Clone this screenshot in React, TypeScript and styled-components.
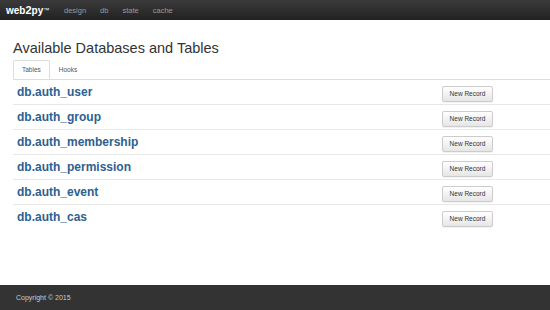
import React from 'react';
import styled, { createGlobalStyle } from 'styled-components';

const GlobalStyle = createGlobalStyle`
  html, body {
    margin: 0;
    padding: 0;
    background: #fff;
    font-family: 'Liberation Sans', Arial, sans-serif;
    color: #333;
  }
`;

const Page = styled.div`
  width: 550px;
  height: 310px;
  display: flex;
  flex-direction: column;
  overflow: hidden;
`;

const NavBar = styled.div`
  height: 20px;
  background: linear-gradient(to bottom, #3a3a3a 0%, #222 100%);
  display: flex;
  align-items: center;
  padding-left: 6px;
  flex-shrink: 0;
`;

const Brand = styled.div`
  color: #fff;
  font-weight: 700;
  font-size: 10px;
  width: 58px;

  b {
    font-size: 11px;
  }

  sup {
    font-size: 6px;
    font-weight: 400;
    vertical-align: 2px;
  }
`;

const NavLink = styled.span`
  color: #9a9a9a;
  font-size: 7.5px;
  margin-right: 14px;
`;

const Main = styled.div`
  flex: 1;
  padding: 20px 0 0 13px;
`;

const Title = styled.h1`
  margin: 0 0 3px;
  font-size: 14.5px;
  font-weight: 400;
  color: #333;
  line-height: 17px;
`;

const Tabs = styled.div`
  display: flex;
  border-bottom: 1px solid #ddd;
  height: 19px;
`;

const Tab = styled.div<{ active?: boolean }>`
  font-size: 6.5px;
  color: #555;
  padding: 0 8px;
  display: flex;
  align-items: center;
  height: 19px;
  box-sizing: border-box;
  border: 1px solid ${(p) => (p.active ? '#ddd' : 'transparent')};
  border-bottom-color: ${(p) => (p.active ? '#fff' : 'transparent')};
  border-radius: 2px 2px 0 0;
  margin-bottom: -1px;
  background: #fff;
`;

const Table = styled.div`
  display: flex;
  flex-direction: column;
`;

const Row = styled.div<{ last?: boolean }>`
  display: grid;
  grid-template-columns: 429px auto;
  align-items: center;
  height: 25px;
  border-bottom: 1px solid ${(p) => (p.last ? 'transparent' : '#e8e8e8')};
  box-sizing: border-box;
`;

const TableLink = styled.a`
  color: #2d6190;
  font-weight: 700;
  font-size: 12px;
  padding-left: 4px;
  text-decoration: none;
`;

const Button = styled.button`
  width: 51px;
  height: 16px;
  padding: 0;
  font-family: 'Liberation Sans', Arial, sans-serif;
  font-size: 6.5px;
  color: #333;
  background: linear-gradient(to bottom, #fff 0%, #e6e6e6 100%);
  border: 1px solid #ccc;
  border-radius: 2px;
  box-shadow: 0 1px 1px rgba(0, 0, 0, 0.06);
`;

const Footer = styled.div`
  height: 25px;
  background: #333;
  display: flex;
  align-items: center;
  padding-left: 16px;
  color: #ccc;
  font-size: 7px;
  flex-shrink: 0;
`;

const tables = [
  'db.auth_user',
  'db.auth_group',
  'db.auth_membership',
  'db.auth_permission',
  'db.auth_event',
  'db.auth_cas',
];

const App: React.FC = () => (
  <>
    <GlobalStyle />
    <Page>
      <NavBar>
        <Brand>
          web<b>2</b>py<sup>™</sup>
        </Brand>
        <NavLink>design</NavLink>
        <NavLink>db</NavLink>
        <NavLink>state</NavLink>
        <NavLink>cache</NavLink>
      </NavBar>
      <Main>
        <Title>Available Databases and Tables</Title>
        <Tabs>
          <Tab active>Tables</Tab>
          <Tab>Hooks</Tab>
        </Tabs>
        <Table>
          {tables.map((t, i) => (
            <Row key={t} last={i === tables.length - 1}>
              <TableLink href="#">{t}</TableLink>
              <div>
                <Button>New Record</Button>
              </div>
            </Row>
          ))}
        </Table>
      </Main>
      <Footer>Copyright © 2015</Footer>
    </Page>
  </>
);

export default App;
